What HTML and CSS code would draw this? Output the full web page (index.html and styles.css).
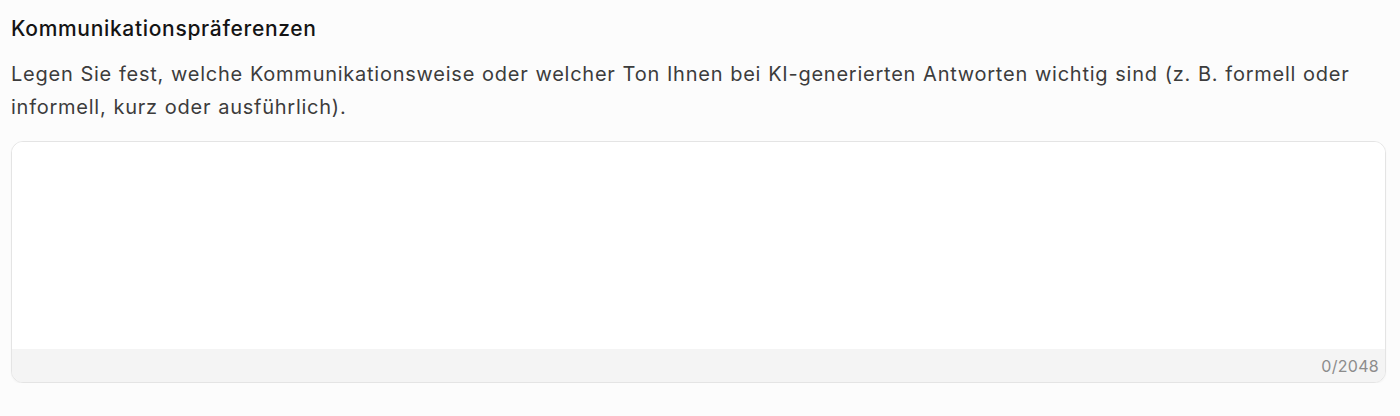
FILE: index.html
```html
<!DOCTYPE html>
<html lang="de">
<head>
  <meta charset="UTF-8" />
  <title>Kommunikationspräferenzen</title>
  <link rel="stylesheet" href="styles.css">
</head>
<body>
  <!-- Preference field -->
  <div class="pref-section">
    <h2 class="pref-title">Kommunikationspräferenzen</h2>
    <p class="pref-desc">Legen Sie fest, welche Kommunikationsweise oder welcher Ton Ihnen bei KI-generierten Antworten wichtig sind (z. B. formell oder informell, kurz oder ausführlich).</p>
    <div class="pref-box">
      <textarea class="pref-input" maxlength="2048"></textarea>
      <div class="pref-footer">
        <span class="pref-count">0/2048</span>
      </div>
    </div>
  </div>
</body>
</html>
```

FILE: styles.css
```css
/* Global styles */
body {
  margin: 0;
  background: #fcfcfc;
  color: #111;
  font-family: Inter, "Noto Sans", sans-serif;
}
.pref-section {
  padding: 15px 14px 0 11px;
}
.pref-title {
  margin: 0;
  font-size: 21px;
  font-weight: 500;
  line-height: 28px;
  letter-spacing: 0.68px;
  color: #141414;
}
.pref-desc {
  margin: 15px 0 17px;
  font-size: 20px;
  line-height: 33px;
  letter-spacing: 0.75px;
  word-spacing: 0.6px;
  color: #3c3c3c;
}
/* Textarea box */
.pref-box {
  border: 1px solid #e4e4e4;
  border-radius: 12px;
  background: #fff;
  overflow: hidden;
  box-shadow: 0 1px 2px rgba(0,0,0,0.04);
}
.pref-input {
  display: block;
  width: 100%;
  height: 207px;
  box-sizing: border-box;
  border: none;
  outline: none;
  resize: none;
  padding: 12px 14px;
  font: inherit;
  background: #fff;
}
.pref-footer {
  background: #f4f4f4;
  height: 33px;
  display: flex;
  justify-content: flex-end;
  align-items: center;
  padding: 0 6px;
}
.pref-count {
  font-size: 16px;
  letter-spacing: 0.3px;
  color: #8c8c8c;
}
```
